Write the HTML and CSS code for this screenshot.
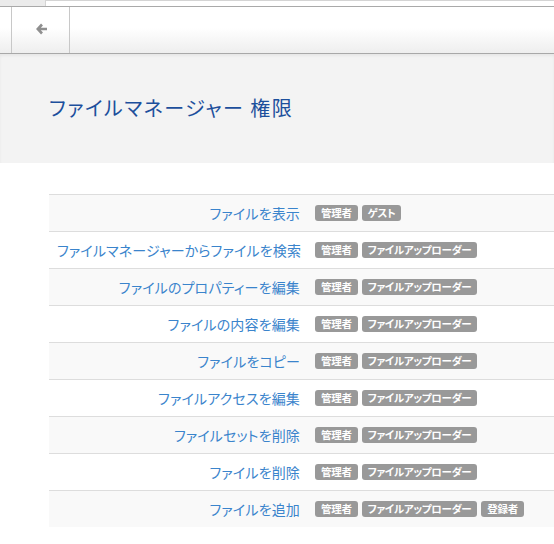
FILE: index.html
```html
<!DOCTYPE html>
<html lang="ja">
<head>
<meta charset="utf-8">
<title>ファイルマネージャー 権限</title>
<link rel="stylesheet" href="styles.css">
</head>
<body>
<div class="topstrip"><div class="ts-left"></div><div class="ts-right"></div></div>
<div class="toolbar">
  <div class="tb-gap"></div>
  <div class="tb-btn">
    <svg width="12" height="12" viewBox="0 0 12 12"><path d="M6 1.5 L1.8 6 L6 10.5 M2.2 6 H11" fill="none" stroke="#8f8f8f" stroke-width="2.6" stroke-linejoin="miter" stroke-linecap="butt"/></svg>
  </div>
  <div class="tb-rest"></div>
</div>
<div class="header"><h1 class="title">ファイルマネージャー 権限</h1></div>
<div class="content">
  <table class="perms">
    <colgroup><col class="c-name"><col class="c-roles"></colgroup>
    <tr><td class="name">ファイルを表示</td><td class="roles"><span class="label">管理者</span><span class="label">ゲスト</span></td></tr>
    <tr><td class="name">ファイルマネージャーからファイルを検索</td><td class="roles"><span class="label">管理者</span><span class="label">ファイルアップローダー</span></td></tr>
    <tr><td class="name">ファイルのプロパティーを編集</td><td class="roles"><span class="label">管理者</span><span class="label">ファイルアップローダー</span></td></tr>
    <tr><td class="name">ファイルの内容を編集</td><td class="roles"><span class="label">管理者</span><span class="label">ファイルアップローダー</span></td></tr>
    <tr><td class="name">ファイルをコピー</td><td class="roles"><span class="label">管理者</span><span class="label">ファイルアップローダー</span></td></tr>
    <tr><td class="name">ファイルアクセスを編集</td><td class="roles"><span class="label">管理者</span><span class="label">ファイルアップローダー</span></td></tr>
    <tr><td class="name">ファイルセットを削除</td><td class="roles"><span class="label">管理者</span><span class="label">ファイルアップローダー</span></td></tr>
    <tr><td class="name">ファイルを削除</td><td class="roles"><span class="label">管理者</span><span class="label">ファイルアップローダー</span></td></tr>
    <tr><td class="name">ファイルを追加</td><td class="roles"><span class="label">管理者</span><span class="label">ファイルアップローダー</span><span class="label">登録者</span></td></tr>
  </table>
</div>
</body>
</html>
```
FILE: styles.css
```css
html, body {
  margin: 0;
  padding: 0;
  background: #ffffff;
  font-family: "Noto Sans CJK JP", "Noto Sans", sans-serif;
  overflow: hidden;
}
.topstrip {
  display: flex;
  height: 6px;
  border-bottom: 1px solid #a9a9a9;
}
.ts-left {
  width: 45px;
  background: #ebebeb;
}
.ts-right {
  flex: 1;
  background: #ffffff;
  border-top: 1px solid #d4d4d4;
  border-left: 1px solid #d4d4d4;
}
.toolbar {
  display: flex;
  height: 46px;
  background: linear-gradient(#ffffff 0%, #ffffff 45%, #eeeeee 100%);
  border-bottom: 1px solid #a8a8a8;
}
.tb-gap {
  width: 11px;
  border-right: 1px solid #c8c8c8;
}
.tb-btn {
  width: 58px;
  border-right: 1px solid #c8c8c8;
  display: flex;
  align-items: center;
  justify-content: center;
  padding: 0 0 2px 2px;
  box-sizing: border-box;
}
.tb-rest { flex: 1; }
.header {
  background: #f3f3f3;
  height: 109px;
  padding: 0 49px;
  box-shadow: inset 0 2px 3px rgba(0,0,0,0.05);
}
.title {
  margin: 0;
  padding-top: 41px;
  font-size: 20px;
  font-weight: normal;
  color: #1c4f9c;
  line-height: 26px;
  font-feature-settings: "palt";
  letter-spacing: 1.5px;
}
.content {
  padding: 31px 0 0 49px;
}
.perms {
  border-collapse: collapse;
  table-layout: fixed;
  width: 505px;
}
.c-name { width: 259px; }
.perms tr:nth-child(odd) { background: #f9f9f9; }
.perms td {
  border-top: 1px solid #dddddd;
  height: 36px;
  padding: 0 8px;
  vertical-align: middle;
}
.perms td.name {
  text-align: right;
  color: #3a84cc;
  font-size: 14px;
  white-space: nowrap;
  font-feature-settings: "palt";
  letter-spacing: 0.15px;
}
.perms td.roles {
  padding-left: 7px;
  font-size: 0;
  white-space: nowrap;
}
.label {
  display: inline-block;
  background: #999999;
  color: #ffffff;
  font-size: 10.5px;
  font-weight: bold;
  line-height: 12px;
  padding: 2px 6px 2px;
  border-radius: 3px;
  margin-right: 4px;
  vertical-align: middle;
  font-feature-settings: "palt";
  letter-spacing: -0.3px;
}
```
